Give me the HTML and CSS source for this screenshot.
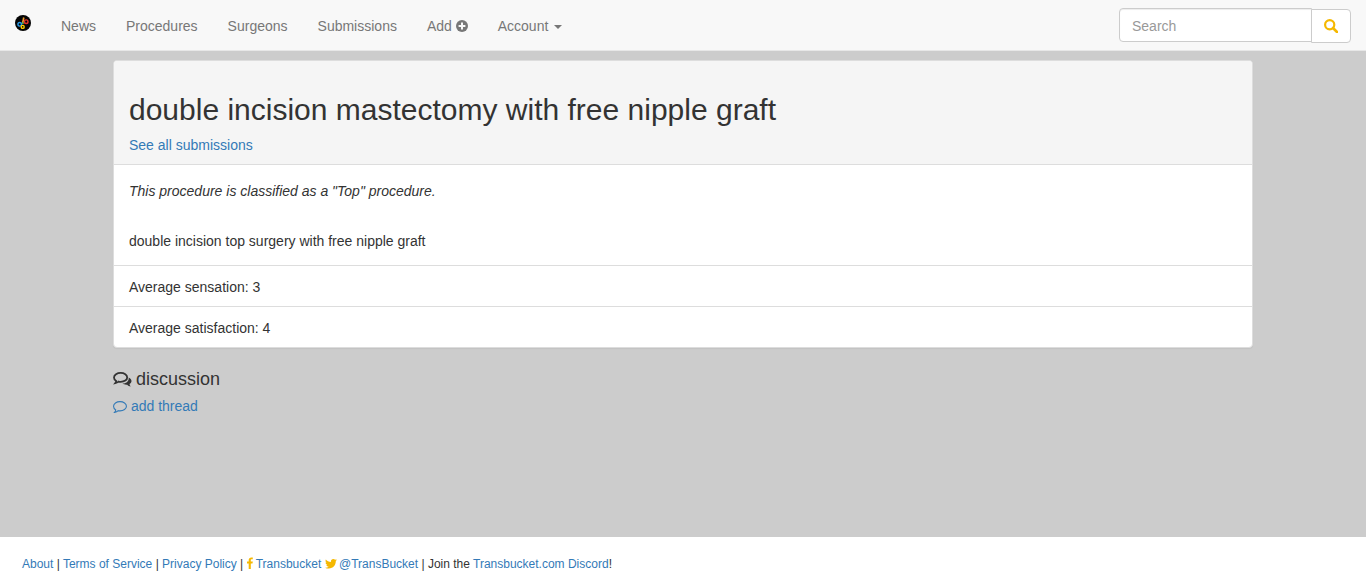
FILE: index.html
```html
<!DOCTYPE html>
<html lang="en">
<head>
    <meta charset="UTF-8">
    <title>double incision mastectomy with free nipple graft - Transbucket</title>
    <link rel="stylesheet" href="styles.css">
</head>
<body>
    <nav class="navbar">
        <a class="brand" href="#">
            <svg class="logo" viewBox="0 0 16 16" width="16" height="16">
                <circle cx="8" cy="8" r="8" fill="#050505"/>
                <path d="M8.800 2.500 L7.500 9" stroke="#f0a030" stroke-width="1.700" fill="none"/>
                <path d="M6 8.800 L10 7.200" stroke="#3aa04a" stroke-width="1.300"/>
                <circle cx="4.700" cy="9.300" r="1.800" stroke="#2a9be8" stroke-width="1.400" fill="none"/>
                <circle cx="11.200" cy="6.700" r="1.800" stroke="#e8322a" stroke-width="1.400" fill="none"/>
                <circle cx="7.700" cy="11.900" r="1.500" stroke="#ffd000" stroke-width="1.400" fill="none"/>
            </svg>
        </a>
        <ul class="nav-links">
            <li><a href="#">News</a></li>
            <li><a href="#">Procedures</a></li>
            <li><a href="#">Surgeons</a></li>
            <li><a href="#">Submissions</a></li>
            <li>
                <a href="#">Add
                    <svg class="icon-plus" viewBox="0 0 12 12" width="12" height="12">
                        <circle cx="6" cy="6" r="6" fill="#777"/>
                        <path d="M6 2.600v6.800M2.600 6h6.800" stroke="#f8f8f8" stroke-width="2"/>
                    </svg>
                </a>
            </li>
            <li><a href="#">Account <span class="caret"></span></a></li>
        </ul>
        <form class="search">
            <input type="text" placeholder="Search">
            <button type="button">
                <svg viewBox="0 0 14 14" width="14" height="14">
                    <circle cx="5.700" cy="5.700" r="4.600" fill="none" stroke="#f5b800" stroke-width="2.200"/>
                    <path d="M9 9l4 4" stroke="#f5b800" stroke-width="2.600" stroke-linecap="round"/>
                </svg>
            </button>
        </form>
    </nav>

    <div class="container">
        <div class="panel">
            <div class="panel-heading">
                <h1>double incision mastectomy with free nipple graft</h1>
                <a href="#">See all submissions</a>
            </div>
            <div class="panel-body">
                <p class="classified">This procedure is classified as a "Top" procedure.</p>
                <p>double incision top surgery with free nipple graft</p>
            </div>
            <ul class="list-group">
                <li>Average sensation: 3</li>
                <li>Average satisfaction: 4</li>
            </ul>
        </div>

        <h4 class="discussion">
            <svg viewBox="0.4 0.6 18.800 15" width="19" height="15">
                <path d="M8 1.500c3.600 0 6.500 2 6.500 4.500S11.600 10.500 8 10.500c-.8 0-1.500-.1-2.200-.3C4.800 11 3.800 11.500 2.500 11.800c.5-.7.9-1.400 1-2.200C2.100 8.800 1.300 7.500 1.300 6 1.300 3.500 4.400 1.500 8 1.500z" fill="none" stroke="#333" stroke-width="1.800"/>
                <path d="M16 6c1.700.8 2.800 2 2.800 3.500 0 1.300-.8 2.400-2 3.100.1.900.5 1.700 1.200 2.500-1.400-.2-2.600-.9-3.500-1.800-1.800.2-3.600-.2-4.800-1.100 3 .1 6.700-1.900 6.300-6.200z" fill="#333"/>
            </svg>
            discussion
        </h4>
        <a class="add-thread" href="#">
            <svg viewBox="0.4 0.5 15.200 13" width="14" height="12">
                <path d="M8 1.200c3.800 0 7 2.200 7 5s-3.200 5-7 5c-.7 0-1.300-.1-1.900-.2-1 1-2.400 1.600-4 1.800.7-.8 1.200-1.600 1.300-2.600C1.900 9.300 1 7.800 1 6.200c0-2.800 3.200-5 7-5z" fill="none" stroke="#337ab7" stroke-width="1.200"/>
            </svg>
            add thread
        </a>
    </div>

    <footer class="footer">
        <a href="#">About</a> | <a href="#">Terms of Service</a> | <a href="#">Privacy Policy</a> |
        <svg class="icon-fb" viewBox="0 0 6 12" width="6" height="12">
            <path d="M3.800 12V6.600h1.700l.3-2H3.800V3.300c0-.6.200-1 1-1h1V.5C5.600.4 5 .4 4.400.4 2.800.4 1.700 1.300 1.700 3.100v1.500H0v2h1.700V12z" fill="#f5b800"/>
        </svg>
        <a href="#">Transbucket</a>
        <svg class="icon-tw" viewBox="0 0 24 20" width="12" height="10">
            <path d="M24 2.400c-.9.400-1.800.7-2.800.8 1-.6 1.800-1.600 2.200-2.700-1 .6-2 1-3.100 1.200C19.300.7 18 0 16.600 0c-2.700 0-4.900 2.200-4.900 4.900 0 .4 0 .8.100 1.100C7.700 5.800 4.100 3.900 1.700.9c-.4.700-.7 1.600-.7 2.500 0 1.700.9 3.200 2.200 4.100-.8 0-1.600-.2-2.200-.6v.1c0 2.400 1.700 4.400 3.900 4.800-.4.100-.8.200-1.300.2-.3 0-.6 0-.9-.1.600 2 2.400 3.400 4.600 3.400-1.700 1.300-3.800 2.100-6.100 2.100-.4 0-.8 0-1.200-.1C2.200 18.300 4.800 19.100 7.500 19.100c9.100 0 14-7.500 14-14v-.6c1-.7 1.800-1.500 2.500-2.100z" fill="#f5b800"/>
        </svg>
        <a href="#">@TransBucket</a> | Join the <a href="#">Transbucket.com Discord</a>!
    </footer>
</body>
</html>
```

FILE: styles.css
```css
* {
    box-sizing: border-box;
}

html, body {
    height: 100%;
}

body {
    margin: 0;
    display: flex;
    flex-direction: column;
    font-family: "Liberation Sans", Arial, sans-serif;
    font-size: 14px;
    line-height: 20px;
    color: #333;
    background-color: #ccc;
}

a {
    color: #337ab7;
    text-decoration: none;
}

.navbar {
    display: flex;
    align-items: flex-start;
    height: 51px;
    flex-shrink: 0;
    padding-right: 15px;
    background-color: #f8f8f8;
    border-bottom: 1px solid #e7e7e7;
}

.brand {
    display: block;
    padding: 15px 15px 0;
    height: 50px;
}

.logo {
    display: block;
}

.nav-links {
    display: flex;
    list-style: none;
    margin: 0;
    padding: 0;
}

.nav-links a {
    display: block;
    padding: 16px 15px 14px;
    color: #777;
}

.icon-plus {
    vertical-align: -1px;
}

.caret {
    display: inline-block;
    width: 0;
    height: 0;
    margin-left: 2px;
    vertical-align: middle;
    border-top: 4px solid #777;
    border-left: 4px solid transparent;
    border-right: 4px solid transparent;
}

.search {
    display: flex;
    align-items: flex-start;
    margin: 8px 0 0 auto;
}

.search input {
    width: 193px;
    height: 34px;
    padding: 8px 12px 6px;
    font: inherit;
    color: #555;
    background: #fff;
    border: 1px solid #ccc;
    border-radius: 4px 0 0 4px;
    box-shadow: inset 0 1px 1px rgba(0,0,0,0.075);
}

.search input::placeholder {
    color: #999;
}

.search button {
    width: 40px;
    height: 34px;
    margin: 1px 0 0 -1px;
    padding: 2px 0 0;
    background: #fff;
    border: 1px solid #ccc;
    border-radius: 0 4px 4px 0;
}

.container {
    flex: 1;
    width: 1140px;
    margin: 0 auto;
    padding-top: 9px;
}

.panel {
    background: #fff;
    border: 1px solid #ddd;
    border-radius: 4px;
    box-shadow: 0 1px 1px rgba(0,0,0,0.05);
}

.panel-heading {
    height: 104px;
    padding: 10px 15px;
    background-color: #f5f5f5;
    border-bottom: 1px solid #ddd;
    border-radius: 3px 3px 0 0;
}

h1 {
    margin: 10px 0 9px;
    padding-top: 12px;
    font-size: 30px;
    font-weight: 500;
    line-height: 33px;
}

.panel-body {
    height: 100px;
    padding: 16px 15px 0;
}

.panel-body p {
    margin: 0 0 30px;
}

.classified {
    font-style: italic;
}

.list-group {
    list-style: none;
    margin: 0;
    padding: 0;
}

.list-group li {
    height: 41px;
    padding: 11px 15px 9px;
    border-top: 1px solid #ddd;
}

.discussion {
    margin: 21px 0 7px;
    font-size: 18px;
    font-weight: 500;
    line-height: 20px;
}

.discussion svg {
    margin-right: -1px;
    vertical-align: -2px;
}

.add-thread svg {
    vertical-align: -2px;
}

.footer {
    flex-shrink: 0;
    height: 50px;
    padding: 17px 22px 0;
    font-size: 12px;
    line-height: 20px;
    background: #fff;
}

.icon-fb {
    vertical-align: -1px;
}

.icon-tw {
    margin-right: -1px;
    vertical-align: -1px;
}
```
